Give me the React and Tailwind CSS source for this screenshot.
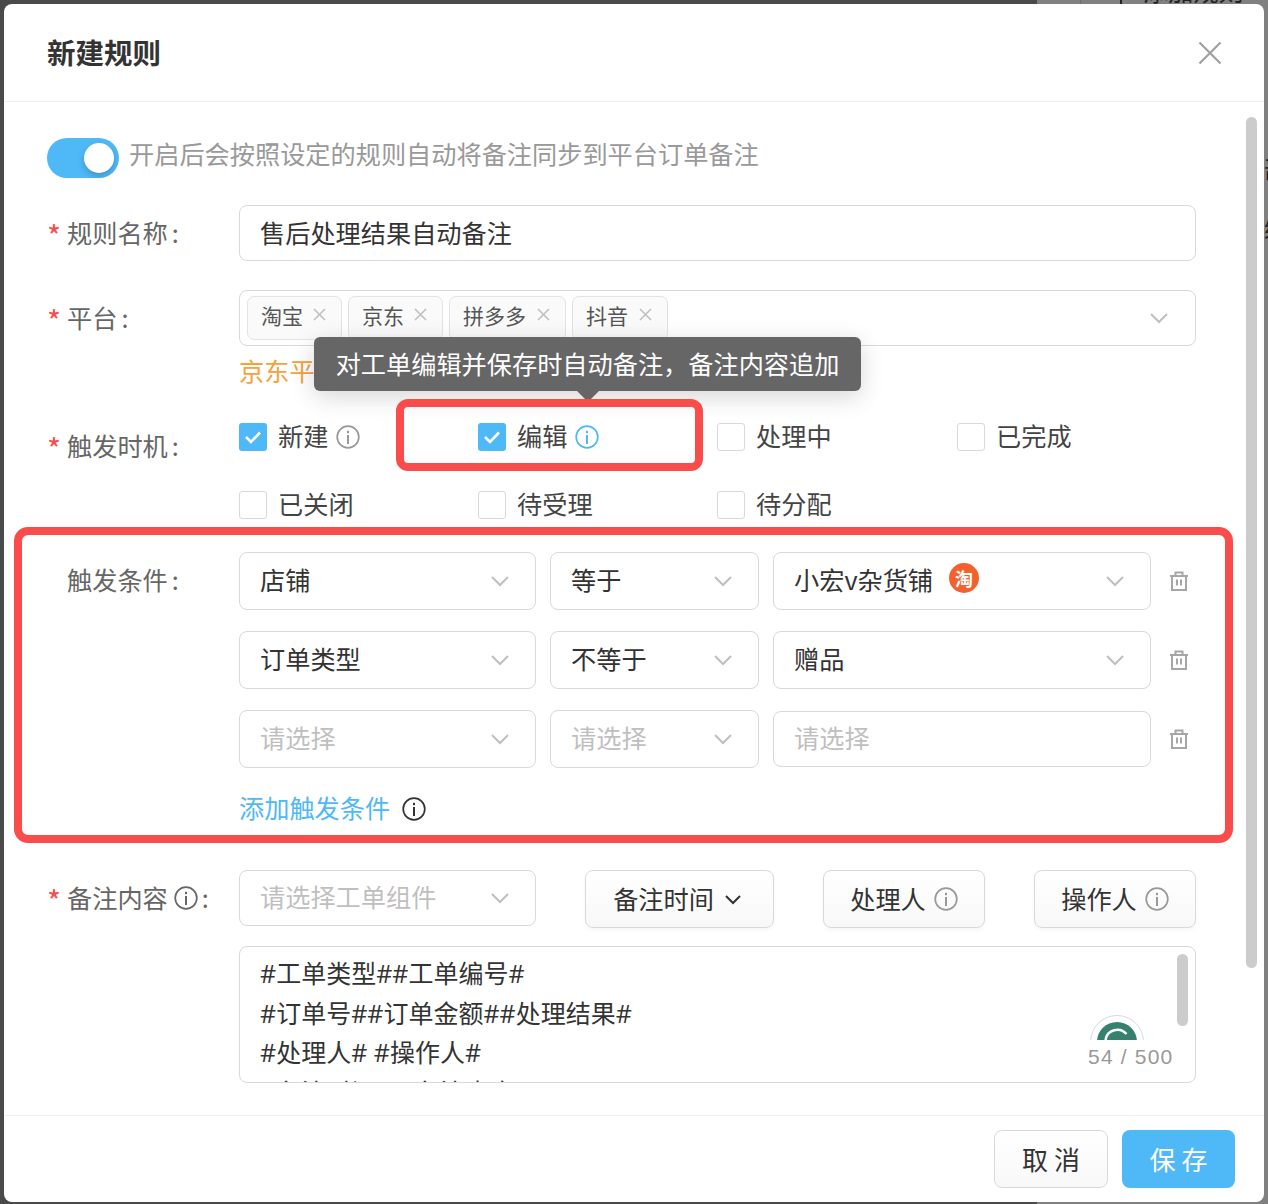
import React from "react";

const Chevron = ({ color = "#bfbfbf" }) => (
  <svg width="20" height="12" viewBox="0 0 20 12" fill="none" className="shrink-0">
    <path d="M2 2l8 8 8-8" stroke={color} strokeWidth="2" />
  </svg>
);

const InfoIcon = ({ color = "#999999", size = 24 }) => (
  <svg width={size} height={size} viewBox="0 0 24 24" fill="none" className="shrink-0">
    <circle cx="12" cy="12" r="10.8" stroke={color} strokeWidth="1.7" />
    <rect x="11" y="10" width="2" height="9" fill={color} />
    <rect x="11" y="5.8" width="2" height="2.4" fill={color} />
  </svg>
);

const Trash = () => (
  <svg width="20" height="20" viewBox="0 0 20 20" fill="none" className="shrink-0">
    <path d="M1 5h18M3 5v14h14V5M6.5 5V1.5h7V5" stroke="#a6a6a6" strokeWidth="2" />
    <path d="M8 8.5v6M12 8.5v6" stroke="#a6a6a6" strokeWidth="2" />
  </svg>
);

const Star = () => (
  <span className="w-[20px] shrink-0 text-[#f94c4b] text-[30px] leading-none pt-[3px]">*</span>
);

const Label = ({ required, children }) => (
  <div className="w-[192px] h-[56px] shrink-0 flex items-center text-[#666666]">
    {required ? <Star /> : <span className="w-[20px] shrink-0" />}
    <span className="pb-[3px]">
      {children}
      <span className="ml-[4px]">:</span>
    </span>
  </div>
);

const Select = ({ text, placeholder, width, height = "h-[58px]", arrow = true, children }) => (
  <div className={`${width} ${height} shrink-0 flex items-center justify-between bg-white border border-[#d9d9d9] rounded-[8px] pl-[20px] pr-[25px]`}>
    <span className={`flex items-center ${placeholder ? "text-[#bfbfbf]" : "text-[#333333]"}`}>
      <span className="pb-[4px]">{text}</span>
      {children}
    </span>
    {arrow && <Chevron />}
  </div>
);

const Tag = ({ text, width }) => (
  <div className={`${width} h-[44px] flex items-center justify-between bg-[#fafafa] border border-[#e3e3e3] rounded-[7px] pl-[13px] pr-[15px] pb-[7px] text-[21px] text-[#555555]`}>
    {text}
    <svg width="13" height="13" viewBox="0 0 13 13" fill="none">
      <path d="M1 1l11 11M12 1L1 12" stroke="#bdbdbd" strokeWidth="1.5" />
    </svg>
  </div>
);

const Check = ({ checked, text, children }) => (
  <div className="flex items-center h-[28px] text-[#444444]">
    {checked ? (
      <span className="w-[28px] h-[28px] rounded-[3px] bg-[#4fb8f7] flex items-center justify-center">
        <svg width="18" height="14" viewBox="0 0 18 14" fill="none">
          <path d="M2 7l5 5 9-9.5" stroke="#ffffff" strokeWidth="2.6" />
        </svg>
      </span>
    ) : (
      <span className="w-[28px] h-[28px] rounded-[3px] bg-white border border-[#d9d9d9]" />
    )}
    <span className="ml-[11px] pb-[4px]">{text}</span>
    {children}
  </div>
);

const ToolButton = ({ width, text, children }) => (
  <div className={`${width} h-[58px] flex items-center justify-center gap-[8px] border border-[#d9d9d9] rounded-[8px] bg-gradient-to-b from-white to-[#f8f8f8] shadow-[0_2px_4px_rgba(0,0,0,0.04)] text-[#333333]`}>
    <span className="pb-[3px]">{text}</span>
    {children}
  </div>
);

const conditions = [
  { a: "店铺", b: "等于", c: "小宏v杂货铺", badge: true },
  { a: "订单类型", b: "不等于", c: "赠品" },
  { a: "请选择", b: "请选择", c: "请选择", empty: true },
];

export default function App() {
  return (
    <div className="relative w-[1268px] h-[1204px] overflow-hidden bg-[#4a4a4a] text-[25.2px] leading-[36px] font-['Noto_Sans_CJK_SC','Noto_Sans',sans-serif]">
      {/* page behind the dialog */}
      <div className="absolute right-0 top-0 bottom-0 w-[231px] bg-[#808080]">
        <div className="absolute left-[43px] top-0 h-[4px] w-px bg-[#6e6e6e]" />
        <div className="absolute left-[83px] top-0 h-[4px] w-[2px] bg-[#222222]" />
        <span className="absolute left-[106px] top-[-28px] text-[#222222] whitespace-nowrap">添加规则</span>
        <span className="absolute left-[227px] top-[149px] text-[#222222]">部</span>
        <span className="absolute left-[227px] top-[209px] text-[#222222]">编</span>
      </div>

      <div className="absolute left-[4px] top-[4px] w-[1260px] h-[1198px] bg-white rounded-[8px] flex flex-col overflow-hidden">
        <div className="h-[98px] shrink-0 border-b border-[#eeeeee] flex items-center justify-between pl-[43px] pr-[42px]">
          <span className="text-[28.5px] font-bold text-[#333333] pb-[2px]">新建规则</span>
          <svg width="24" height="24" viewBox="0 0 24 24" fill="none">
            <path d="M1.5 1.5l21 21M22.5 1.5l-21 21" stroke="#a0a0a0" strokeWidth="2.2" />
          </svg>
        </div>

        <div className="relative flex-1 min-h-0 overflow-hidden pl-[43px] pt-[36px]">
          <div className="absolute right-[7px] top-[15px] w-[11px] h-[851px] rounded-full bg-[#cccccc]" />

          <div className="flex items-center h-[40px]">
            <div className="w-[72px] h-[40px] rounded-full bg-[#4fb8f7] flex items-center justify-end pr-[5px]">
              <span className="w-[30px] h-[30px] rounded-full bg-white shadow-[0_3px_6px_rgba(0,0,0,0.2)]" />
            </div>
            <span className="ml-[10px] pb-[10px] text-[#999999]">开启后会按照设定的规则自动将备注同步到平台订单备注</span>
          </div>

          <div className="flex mt-[27px]">
            <Label required>规则名称</Label>
            <div className="w-[957px] h-[56px] flex items-center bg-white border border-[#d9d9d9] rounded-[8px] pl-[20px] pb-[2px] text-[#333333]">
              售后处理结果自动备注
            </div>
          </div>

          <div className="flex mt-[29px]">
            <Label required>平台</Label>
            <div className="w-[957px]">
              <div className="h-[56px] flex items-center justify-between border border-[#d9d9d9] rounded-[8px] pl-[7px] pr-[26px]">
                <div className="flex gap-[6px]">
                  <Tag text="淘宝" width="w-[95px]" />
                  <Tag text="京东" width="w-[95px]" />
                  <Tag text="拼多多" width="w-[117px]" />
                  <Tag text="抖音" width="w-[96px]" />
                </div>
                <Chevron />
              </div>
              <div className="h-[52px] flex items-center pb-[4px] text-[#f5a13c]">京东平台暂不支持同步备注</div>
            </div>
          </div>

          <div className="flex mt-[20px]">
            <Label required>触发时机</Label>
            <div className="w-[957px] pt-[5px] grid grid-cols-[239px_239px_240px_1fr] gap-y-[40px]">
              <Check checked text="新建">
                <span className="ml-[8px]"><InfoIcon /></span>
              </Check>
              <div className="relative">
                <Check checked text="编辑">
                  <span className="ml-[8px]"><InfoIcon color="#4fb8f7" /></span>
                </Check>
                <div className="absolute left-[-164px] top-[-86px] w-[547px] h-[54px] flex items-center justify-center rounded-[6px] bg-[#666666] pb-[2px] text-[#ffffff] shadow-[0_6px_24px_rgba(0,0,0,0.16)] whitespace-nowrap">
                  对工单编辑并保存时自动备注，备注内容追加
                </div>
                <div className="absolute left-[99px] top-[-32px] w-0 h-0 border-x-[11px] border-x-transparent border-t-[11px] border-t-[#666666]" />
                <div className="absolute left-[-82px] top-[-24px] w-[307px] h-[72px] border-[8px] border-[#f94c4b] rounded-[12px]" />
              </div>
              <Check text="处理中" />
              <Check text="已完成" />
              <Check text="已关闭" />
              <Check text="待受理" />
              <Check text="待分配" />
            </div>
          </div>

          <div className="-ml-[33px] mt-[8px] w-[1219px] h-[316px] border-[8px] border-[#f94c4b] rounded-[14px] pl-[25px] pt-[17px] flex">
            <div className="w-[192px] h-[58px] shrink-0 flex items-center text-[#666666] pl-[20px] pb-[4px]">
              触发条件<span className="ml-[4px]">:</span>
            </div>
            <div className="flex flex-col gap-[21px]">
              {conditions.map((row, i) => (
                <div key={i} className="flex items-center gap-[14px]">
                  <Select text={row.a} placeholder={row.empty} width="w-[297px]" />
                  <Select text={row.b} placeholder={row.empty} width="w-[209px]" />
                  <Select text={row.c} placeholder={row.empty} width="w-[378px]" height={row.empty ? "h-[56px]" : "h-[58px]"} arrow={!row.empty}>
                    {row.badge && (
                      <span className="ml-[16px] -mt-[6px] w-[30px] h-[30px] rounded-full bg-[#f2622e] flex items-center justify-center text-white text-[18px] font-bold leading-none">
                        淘
                      </span>
                    )}
                  </Select>
                  <span className="ml-[4px]"><Trash /></span>
                </div>
              ))}
              <div className="flex items-center gap-[12px] h-[36px] mt-[2px] text-[#4fb8f7]">
                <span className="pb-[4px]">添加触发条件</span>
                <InfoIcon color="#333333" />
              </div>
            </div>
          </div>

          <div className="flex mt-[27px]">
            <div className="w-[192px] h-[56px] shrink-0 flex items-center text-[#666666]">
              <Star />
              <span className="pb-[2px]">备注内容</span>
              <span className="ml-[6px]"><InfoIcon color="#666666" /></span>
              <span className="ml-[4px] pb-[2px]">:</span>
            </div>
            <div className="w-[957px]">
              <div className="flex items-start justify-between">
                <Select text="请选择工单组件" placeholder width="w-[297px]" height="h-[56px]" />
                <div className="flex gap-[49px]">
                  <ToolButton width="w-[189px]" text="备注时间">
                    <svg width="18" height="11" viewBox="0 0 18 11" fill="none" className="ml-[2px] mr-[4px]">
                      <path d="M2 2l7 7 7-7" stroke="#333333" strokeWidth="2" />
                    </svg>
                  </ToolButton>
                  <ToolButton width="w-[162px]" text="处理人"><InfoIcon /></ToolButton>
                  <ToolButton width="w-[162px]" text="操作人"><InfoIcon /></ToolButton>
                </div>
              </div>
              <div className="relative mt-[18px] h-[137px] overflow-hidden border border-[#d9d9d9] rounded-[8px] pl-[20px] pt-[7px] text-[#333333] text-[25px] leading-[39.5px] font-['Open_Sans','Noto_Sans_CJK_SC',sans-serif]">
                <div>#工单类型##工单编号#</div>
                <div>#订单号##订单金额##处理结果#</div>
                <div>#处理人# #操作人#</div>
                <div>#备注时间# #备注内容#</div>
                <div className="absolute right-[7px] top-[7px] w-[11px] h-[72px] rounded-full bg-[#cccccc]" />
                <svg width="54" height="26" viewBox="0 0 54 26" fill="none" className="absolute left-[850px] top-[67px]">
                  <circle cx="27" cy="28" r="26.5" stroke="#d3d8e6" strokeWidth="1" />
                  <circle cx="27" cy="28" r="20" fill="#35806f" />
                  <path d="M15.5 26a12 12 0 0 1 21-6" stroke="#ffffff" strokeWidth="2.5" />
                </svg>
                <div className="absolute left-[848px] top-[94px] h-[32px] flex items-center text-[21px] text-[#999999] font-['Liberation_Sans',sans-serif] tracking-[1.2px] whitespace-nowrap">
                  54 / 500
                </div>
              </div>
            </div>
          </div>
        </div>

        <div className="h-[87px] shrink-0 border-t border-[#eeeeee] flex items-center justify-end gap-[14px] pr-[29px]">
          <div className="w-[114px] h-[58px] flex items-center justify-center border border-[#d9d9d9] rounded-[8px] bg-gradient-to-b from-white to-[#f8f8f8] text-[#333333] text-[26px]">
            取 消
          </div>
          <div className="w-[113px] h-[58px] flex items-center justify-center rounded-[8px] bg-[#4fb8f7] text-white text-[26px]">
            保 存
          </div>
        </div>
      </div>
    </div>
  );
}
